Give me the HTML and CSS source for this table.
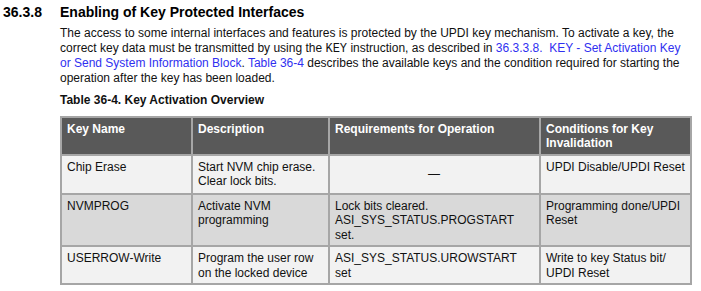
FILE: index.html
```html
<!DOCTYPE html>
<html lang="en">
<head>
    <meta charset="UTF-8">
    <title>36.3.8 Enabling of Key Protected Interfaces</title>
    <link rel="stylesheet" href="styles.css">
</head>
<body>
    <div class="section">
        <h3 class="section-title">
            <span class="section-num">36.3.8</span>
            <span>Enabling of Key Protected Interfaces</span>
        </h3>

        <div class="section-body">
            <p class="text">
                The access to some internal interfaces and features is protected by the UPDI key mechanism. To activate a key, the
                correct key data must be transmitted by using the <code class="mono">KEY</code> instruction, as described in
                <a href="#">36.3.3.8.&nbsp; KEY - Set Activation Key</a>
                <a href="#">or Send System Information Block</a>. <a href="#">Table 36-4</a>
                describes the available keys and the condition required for starting the operation after the key has been loaded.
            </p>

            <div class="caption">Table 36-4. Key Activation Overview</div>

            <table class="keys">
                <colgroup>
                    <col class="c1">
                    <col class="c2">
                    <col class="c3">
                    <col class="c4">
                </colgroup>
                <thead>
                    <tr>
                        <th>Key Name</th>
                        <th>Description</th>
                        <th>Requirements for Operation</th>
                        <th>Conditions for Key Invalidation</th>
                    </tr>
                </thead>
                <tbody>
                    <tr class="light first">
                        <td>Chip Erase</td>
                        <td>Start NVM chip erase. Clear lock bits.</td>
                        <td class="center">—</td>
                        <td>UPDI Disable/UPDI Reset</td>
                    </tr>
                    <tr class="dark">
                        <td>NVMPROG</td>
                        <td>Activate NVM programming</td>
                        <td>Lock bits cleared.<br>ASI_SYS_STATUS.PROGSTART set.</td>
                        <td>Programming done/UPDI Reset</td>
                    </tr>
                    <tr class="light">
                        <td>USERROW-Write</td>
                        <td>Program the user row on the locked device</td>
                        <td>ASI_SYS_STATUS.UROWSTART set</td>
                        <td>Write to key Status bit/ UPDI Reset</td>
                    </tr>
                </tbody>
            </table>
        </div>
    </div>
</body>
</html>
```

FILE: styles.css
```css
:root {
    --text-color: #111111;
    --link-color: #3030f0;
    --head-bg: #595959;
    --row-light: #f2f2f2;
    --row-dark: #d9d9d9;
    --border-color: #a6a6a6;
}

body {
    margin: 0;
    background: #ffffff;
    color: var(--text-color);
    font-family: 'Liberation Sans', Arial, sans-serif;
    font-size: 12px;
    line-height: 14.5px;
}

.section {
    padding: 4px 0 0 3px;
}

.section-title {
    display: flex;
    margin: 0;
    font-size: 14px;
    line-height: 17px;
    font-weight: 700;
    color: #000000;
}

.section-num {
    width: 57px;
    flex-shrink: 0;
}

.section-body {
    padding-left: 57px;
    width: 632px;
}

.text {
    margin: 5px 0 0;
    width: 630px;
}

.mono {
    font-family: 'Liberation Mono', 'Courier New', monospace;
    font-size: 12px;
}

a {
    color: var(--link-color);
    text-decoration: none;
}

.caption {
    margin-top: 8px;
    font-weight: 700;
}

.keys {
    margin-top: 8px;
    width: 630px;
    table-layout: fixed;
    border-collapse: collapse;
}

.keys .c1 { width: 131px; }
.keys .c2 { width: 137px; }
.keys .c3 { width: 211px; }
.keys .c4 { width: 151px; }

.keys th,
.keys td {
    border: 2px solid var(--border-color);
    padding: 4px 6px 3px 5px;
    text-align: left;
    vertical-align: top;
}

.keys th:last-child,
.keys td:last-child {
    padding-right: 1px;
}

.keys th {
    background: var(--head-bg);
    color: #ffffff;
    font-weight: 700;
    height: 29px;
}

.keys .light td {
    background: var(--row-light);
    height: 29px;
}

.keys .first td {
    height: 30px;
}

.keys .dark td {
    background: var(--row-dark);
}

.keys td.center {
    text-align: center;
    vertical-align: middle;
}
```
